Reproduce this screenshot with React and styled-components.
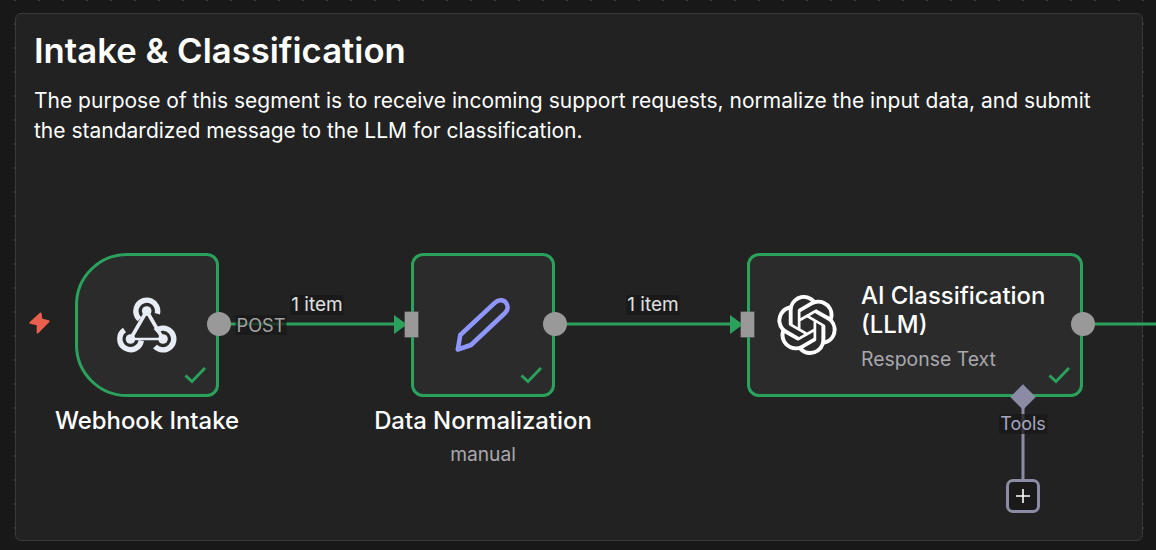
import React from 'react';
import styled, { createGlobalStyle } from 'styled-components';
import { SiOpenai } from 'react-icons/si';

const GREEN = '#2aa25d';
const PORT = '#999999';
const TOOL = '#8b8ba6';

const GlobalStyle = createGlobalStyle`
  html, body {
    margin: 0;
    background: #181818;
    overflow: hidden;
  }
  body {
    font-family: Inter, "Noto Sans", sans-serif;
  }
`;

const Page = styled.div`
  position: relative;
  width: 1156px;
  height: 550px;
  box-sizing: border-box;
  padding: 13px 13px 9px 15px;
  background-color: #181818;
  background-image: radial-gradient(circle, #3c3c3c 1px, transparent 1.4px);
  background-size: 24px 24px;
  background-position: 3px -12px;
  overflow: hidden;
`;

const Note = styled.section`
  height: 100%;
  box-sizing: border-box;
  padding: 15px 18px;
  background: #222222;
  border: 1px solid #3a3a3a;
  border-radius: 6px;
`;

const Title = styled.h1`
  margin: 0 0 14px;
  font-size: 34.7px;
  line-height: 43px;
  font-weight: 600;
  color: #ffffff;
`;

const Body = styled.p`
  margin: 0;
  width: 1080px;
  font-size: 21px;
  line-height: 29.5px;
  color: #ffffff;
`;

const Canvas = styled.div`
  position: absolute;
  inset: 0;
`;

const Wires = styled.svg`
  position: absolute;
  inset: 0;
`;

const Node = styled.div`
  position: absolute;
  left: ${({ $x }) => $x}px;
  top: 253px;
  width: ${({ $w }) => $w}px;
  height: 144px;
  box-sizing: border-box;
  display: flex;
  align-items: center;
  justify-content: ${({ $wide }) => ($wide ? 'flex-start' : 'center')};
  gap: 24px;
  padding-left: ${({ $wide }) => ($wide ? '27px' : '0')};
  background: #2b2b2b;
  border: 3px solid ${GREEN};
  border-radius: ${({ $trigger }) => ($trigger ? '52px 12px 12px 52px' : '12px')};
`;

const OutPort = styled.span`
  position: absolute;
  right: -15px;
  top: 56px;
  width: 24px;
  height: 24px;
  border-radius: 50%;
  background: ${PORT};
`;

const InPort = styled.span`
  position: absolute;
  left: -9px;
  top: 56px;
  width: 12.5px;
  height: 25px;
  background: ${PORT};
  box-shadow: 0 0 0 0.5px #777;
`;

const Done = styled.span`
  position: absolute;
  right: 9px;
  bottom: 10px;
  display: flex;
`;

const NameBlock = styled.div`
  position: absolute;
  top: 100%;
  left: 50%;
  transform: translateX(-50%);
  margin-top: 12px;
  white-space: nowrap;
  text-align: center;
`;

const Name = styled.div`
  font-size: 23.9px;
  line-height: 30px;
  font-weight: 500;
  color: #ffffff;
`;

const Sub = styled.div`
  margin-top: ${({ $tight }) => ($tight ? '5px' : '4px')};
  font-size: ${({ $tight }) => ($tight ? '19.4px' : '19.2px')};
  line-height: 28px;
  color: #a8a8ad;
`;

const InsideText = styled.div`
  display: flex;
  flex-direction: column;
  padding-top: 3px;
`;

const InsideName = styled.div`
  font-size: 23.9px;
  line-height: 29.5px;
  font-weight: 500;
  color: #ffffff;
`;

const WireLabel = styled.span`
  position: absolute;
  left: ${({ $x }) => $x}px;
  top: ${({ $y }) => $y}px;
  transform: translate(-50%, -50%);
  padding: 0 1px;
  font-size: ${({ $size }) => $size}px;
  line-height: 20px;
  color: ${({ $color }) => $color};
  background: rgba(24, 24, 24, 0.75);
`;

const Trigger = styled.span`
  position: absolute;
  left: 28px;
  top: 311px;
  display: flex;
`;

const ToolDiamond = styled.span`
  position: absolute;
  left: 1014px;
  top: 388px;
  width: 18px;
  height: 18px;
  background: ${TOOL};
  transform: rotate(45deg);
`;

const AddButton = styled.button`
  position: absolute;
  left: 1006px;
  top: 479px;
  width: 34px;
  height: 34px;
  box-sizing: border-box;
  padding: 0;
  display: flex;
  align-items: center;
  justify-content: center;
  background: #1a1a1a;
  border: 3px solid ${TOOL};
  border-radius: 7px;
`;

const CheckMark = () => (
  <Done>
    <svg width="24" height="18" viewBox="0 0 24 18" fill="none" stroke={GREEN} strokeWidth="3">
      <path d="M2.5 9.5 L9 15.5 L22 2" />
    </svg>
  </Done>
);

const WebhookIcon = () => (
  <svg width="60" height="56" viewBox="0 0 60 56" fill="none" stroke="#e8ecf5">
    <g strokeWidth="5.4">
      <path d="M40.3 16.8A10.9 10.9 0 1 0 22.5 22.2" />
      <path d="M7.5 33A10.8 10.8 0 1 0 24.3 43.5" />
      <path d="M38 49.5A10.9 10.9 0 1 0 38.5 34" />
    </g>
    <path d="M29.7 14L13.5 42" strokeWidth="3.6" />
    <path d="M29.7 14L46 42" strokeWidth="3.6" />
    <path d="M13.5 42H46" strokeWidth="2.4" />
    <g fill="#e8ecf5" stroke="none">
      <circle cx="29.7" cy="14" r="4.8" />
      <circle cx="13.5" cy="42" r="4.8" />
      <circle cx="46" cy="42" r="4.8" />
    </g>
  </svg>
);

const PenIcon = () => (
  <svg width="60" height="60" viewBox="0 0 60 60" fill="none" stroke="#8f96ff" strokeWidth="4.5" strokeLinejoin="round">
    <path d="M4.3 35 L39 2.6 C43 -1 48 0 50 2.8 C52.5 6 52 10 49 13 L15 45 L1.8 49.5 Z" transform="translate(3 5)" />
  </svg>
);

const BoltIcon = () => (
  <svg width="24" height="24" viewBox="0 0 24 24" fill="#ea5f4d" stroke="#ea5f4d" strokeWidth="2" strokeLinejoin="round">
    <path d="M12.6 2.4L2.4 11.8L9.8 13.4L9.6 21.6L20.6 10.2L13.4 8.6Z" />
  </svg>
);

const Wire = ({ d, color = GREEN }) => <path d={d} stroke={color} strokeWidth="3" fill="none" />;

const App = () => (
  <>
    <GlobalStyle />
    <Page>
      <Note>
        <Title>Intake &amp; Classification</Title>
        <Body>
          The purpose of this segment is to receive incoming support requests, normalize the input data, and submit the
          standardized message to the LLM for classification.
        </Body>
      </Note>
      <Canvas>
        <Wires width="1156" height="550">
          <Wire d="M219 324H400" />
          <path d="M394 315L407 324.5L394 334Z" fill={GREEN} />
          <Wire d="M555 324H736" />
          <path d="M730 315L743 324.5L730 334Z" fill={GREEN} />
          <Wire d="M1083 324H1156" />
          <Wire d="M1023 397V480" color={TOOL} />
        </Wires>

        <Trigger>
          <BoltIcon />
        </Trigger>

        <Node $x={75} $w={144} $trigger>
          <WebhookIcon />
          <OutPort />
          <CheckMark />
          <NameBlock>
            <Name>Webhook Intake</Name>
          </NameBlock>
        </Node>

        <Node $x={411} $w={144}>
          <PenIcon />
          <InPort />
          <OutPort />
          <CheckMark />
          <NameBlock>
            <Name>Data Normalization</Name>
            <Sub>manual</Sub>
          </NameBlock>
        </Node>

        <Node $x={747} $w={336} $wide>
          <SiOpenai size={60} color="#ffffff" />
          <InsideText>
            <InsideName>
              AI Classification
              <br />
              (LLM)
            </InsideName>
            <Sub $tight>Response Text</Sub>
          </InsideText>
          <InPort />
          <OutPort />
          <CheckMark />
        </Node>

        <WireLabel $x={261} $y={325} $size={18.2} $color="#a3a3a3">POST</WireLabel>
        <WireLabel $x={317} $y={305} $size={19} $color="#e0e0e0">1 item</WireLabel>
        <WireLabel $x={653} $y={305} $size={19} $color="#e0e0e0">1 item</WireLabel>
        <WireLabel $x={1023} $y={424} $size={18} $color="#a8a8c0">Tools</WireLabel>

        <ToolDiamond />
        <AddButton aria-label="Add tool">
          <svg width="16" height="16" viewBox="0 0 16 16" stroke="#ffffff" strokeWidth="1.6">
            <path d="M8 1V15M1 8H15" />
          </svg>
        </AddButton>
      </Canvas>
    </Page>
  </>
);

export default App;
